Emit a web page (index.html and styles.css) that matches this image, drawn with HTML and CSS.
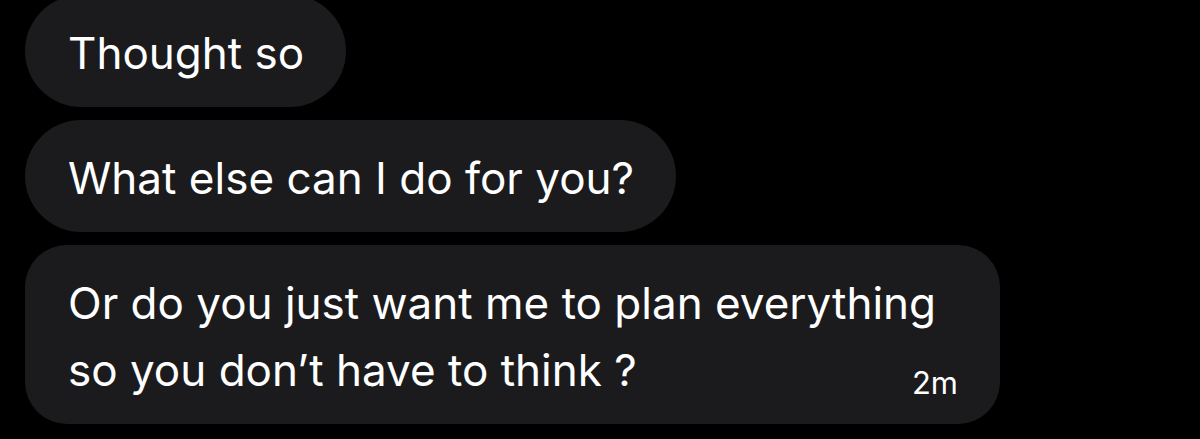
FILE: index.html
```html
<!DOCTYPE html>
<html lang="en">
<head>
<meta charset="utf-8">
<title>Messages</title>
<link rel="stylesheet" href="styles.css">
</head>
<body>
  <main class="thread">
    <div class="bubble pill">Thought so</div>
    <div class="bubble pill">What else can I do for you?</div>
    <div class="bubble block">
      <p class="text">Or do you just want me to plan everything<br>so you don’t have to think ?</p>
      <span class="time">2m</span>
    </div>
  </main>
</body>
</html>
```

FILE: styles.css
```css
html, body {
  margin: 0;
  padding: 0;
  background: #000;
}

body {
  width: 1200px;
  height: 439px;
  overflow: hidden;
  font-family: Inter, Roboto, "Liberation Sans", sans-serif;
  color: #fff;
}

.thread {
  display: flex;
  flex-direction: column;
  align-items: flex-start;
  gap: 13px;
  padding-left: 25px;
  margin-top: -5px;
}

.bubble {
  background: #1b1b1d;
  font-size: 44px;
  line-height: 66px;
  box-sizing: border-box;
}

.pill {
  border-radius: 56px;
  padding: 25px 42px 21px 43px;
}

.block {
  border-radius: 42px;
  padding: 25px 42px 20px 43px;
  display: grid;
  width: 975px;
}

.text {
  margin: 0;
  line-height: 67px;
  grid-area: 1 / 1;
}

.time {
  grid-area: 1 / 1;
  justify-self: end;
  align-self: end;
  font-size: 31px;
  line-height: 31px;
  margin-bottom: 6px;
}
```
